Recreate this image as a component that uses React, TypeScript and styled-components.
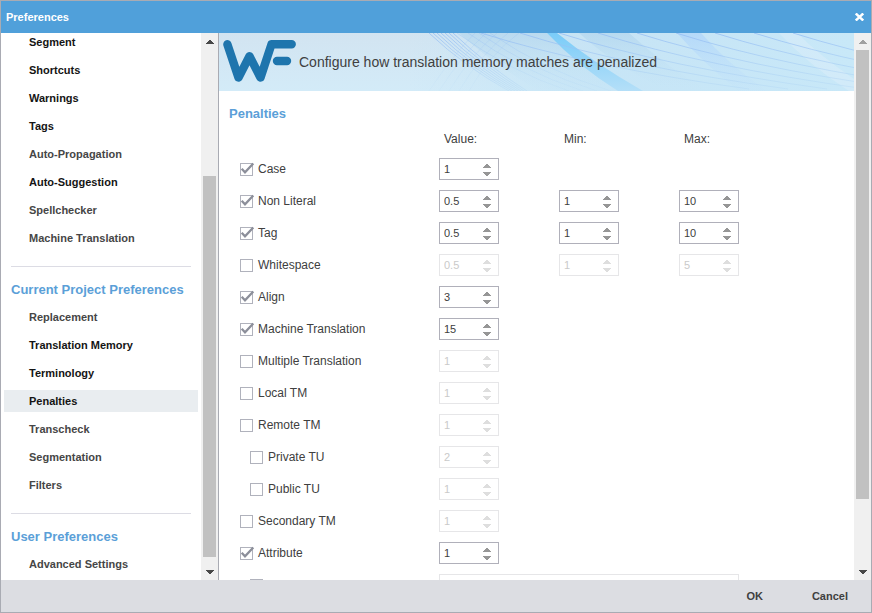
import React, { useState } from "react";
import styled, { createGlobalStyle } from "styled-components";

const GlobalStyle = createGlobalStyle`
  * { box-sizing: border-box; }
  html, body { margin: 0; height: 100%; }
  body {
    font-family: "Liberation Sans", Arial, sans-serif;
    font-size: 12px;
    line-height: 16px;
    color: #404040;
    background: #fff;
  }
  button, input { font: inherit; color: inherit; }
  button { border: 0; padding: 0; background: none; cursor: pointer; }
`;

const Dialog = styled.div`
  display: flex;
  flex-direction: column;
  height: 100vh;
  border: 1px solid #a9abb3;
  background: #fff;
`;

const TitleBar = styled.header`
  flex: none;
  display: flex;
  align-items: center;
  justify-content: space-between;
  height: 32px;
  padding: 0 7px 0 5px;
  background: #50a0da;
  color: #fff;
`;

const Title = styled.h1`
  margin: 0;
  font-size: 11px;
  font-weight: bold;
`;

const CloseButton = styled.button`
  display: flex;
  color: #fff;
`;

const Body = styled.div`
  flex: 1;
  display: flex;
  min-height: 0;
`;

const Sidebar = styled.aside`
  flex: none;
  display: flex;
  width: 218px;
  border-right: 1px solid #a9abb3;
`;

const Nav = styled.nav`
  flex: 1;
  display: flex;
  flex-direction: column;
  justify-content: flex-end;
  overflow: hidden;
  padding: 0 3px 5px;
`;

const NavGroup = styled.section`
  & + & {
    margin-top: 17px;
  }
`;

const GroupTitle = styled.h2`
  margin: 0 7px;
  padding: 15px 0 8px;
  border-top: 1px solid #dcdce4;
  font-size: 13px;
  line-height: 16px;
  font-weight: bold;
  color: #5b9fd8;
`;

const NavList = styled.ul`
  display: flex;
  flex-direction: column;
  gap: 6px;
  margin: 0;
  padding: 0;
  list-style: none;
`;

const NavLink = styled.a<{ $strong?: boolean; $current?: boolean }>`
  display: block;
  padding: 0 25px;
  font-size: 11px;
  line-height: 22px;
  font-weight: bold;
  text-decoration: none;
  color: ${(p) => (p.$strong ? "#141414" : "#464646")};
  background: ${(p) => (p.$current ? "#e9edf0" : "transparent")};
`;

const ScrollTrack = styled.div`
  flex: none;
  display: flex;
  flex-direction: column;
  align-items: center;
  width: 17px;
  background: #f0f0f0;
`;

const ScrollArrow = styled.button<{ $dim?: boolean }>`
  flex: none;
  display: flex;
  align-items: center;
  justify-content: center;
  width: 17px;
  height: 17px;
  color: ${(p) => (p.$dim ? "#a0a0a0" : "#484848")};
`;

const ScrollSpace = styled.div<{ $grow: number }>`
  flex: ${(p) => p.$grow} 1 0;
`;

const ScrollThumb = styled.div<{ $grow: number }>`
  flex: ${(p) => p.$grow} 1 0;
  width: 13px;
  background: #c1c1c1;
`;

const Main = styled.main`
  flex: 1;
  display: flex;
  min-width: 0;
`;

const Page = styled.div`
  flex: 1;
  min-width: 0;
  overflow: hidden;
`;

const Banner = styled.div`
  position: relative;
  display: flex;
  align-items: center;
  height: 58px;
  padding-left: 4px;
  gap: 3px;
  background: linear-gradient(#d2e4f1, #d3ebf8);
`;

const BannerArt = styled.svg`
  position: absolute;
  inset: 0;
  width: 100%;
  height: 100%;
`;

const Logo = styled.svg`
  position: relative;
  flex: none;
`;

const BannerText = styled.p`
  position: relative;
  margin: 0;
  font-size: 14px;
`;

const Section = styled.section`
  padding: 15px 10px;
`;

const SectionTitle = styled.h2`
  margin: 0 0 9px;
  font-size: 13px;
  line-height: 16px;
  font-weight: bold;
  color: #5b9fd8;
`;

const Rows = styled.div`
  display: flex;
  flex-direction: column;
  gap: 10px;
  padding-left: 11px;
`;

const Row = styled.div`
  display: grid;
  grid-template-columns: 199px 120px 120px 60px;
  align-items: center;
`;

const HeaderRow = styled(Row)`
  padding-bottom: 1px;
`;

const ColumnLabel = styled.span`
  padding-left: 5px;
`;

const CheckLabel = styled.label<{ $nested?: boolean }>`
  display: flex;
  align-items: center;
  gap: 5px;
  height: 22px;
  padding-left: ${(p) => (p.$nested ? "10px" : "0")};
`;

const CheckFrame = styled.span`
  display: grid;
  padding-top: 1px;

  & > * {
    grid-area: 1 / 1;
  }
`;

const Checkbox = styled.input`
  appearance: none;
  width: 13px;
  height: 13px;
  margin: 0;
  border: 1px solid #b0b2bc;
  background: #fff;
`;

const CheckMark = styled.svg`
  overflow: visible;
  pointer-events: none;
`;

const SpinBox = styled.span<{ $wide?: boolean }>`
  display: flex;
  align-items: center;
  width: ${(p) => (p.$wide ? "300px" : "60px")};
  height: 22px;
  padding-right: 7px;
  border: 1px solid #b0b0ba;

  &:has(input:disabled) {
    border-color: #e6e6e8;
    color: #cacaca;
  }
`;

const SpinInput = styled.input`
  flex: 1;
  min-width: 0;
  height: 20px;
  padding: 0 0 0 4px;
  border: 0;
  outline: 0;
  background: none;
  font-size: 11px;
  appearance: textfield;

  &::-webkit-inner-spin-button {
    appearance: none;
    margin: 0;
  }
`;

const SpinButtons = styled.span`
  display: flex;
  flex-direction: column;
  gap: 4px;
  padding-top: 2px;
`;

const SpinButton = styled.button`
  display: flex;
  color: #969696;

  &:disabled {
    color: #dedede;
  }
`;

const Footer = styled.footer`
  flex: none;
  display: flex;
  align-items: center;
  justify-content: flex-end;
  gap: 49px;
  height: 32px;
  padding-right: 23px;
  background: #dcdde2;
`;

const FooterButton = styled.button`
  font-size: 11px;
  font-weight: bold;
`;

type NavEntry = { label: string; strong?: boolean; current?: boolean };

const navGroups: { title?: string; items: NavEntry[] }[] = [
  {
    items: [
      { label: "Segment", strong: true },
      { label: "Shortcuts", strong: true },
      { label: "Warnings", strong: true },
      { label: "Tags", strong: true },
      { label: "Auto-Propagation" },
      { label: "Auto-Suggestion", strong: true },
      { label: "Spellchecker" },
      { label: "Machine Translation" },
    ],
  },
  {
    title: "Current Project Preferences",
    items: [
      { label: "Replacement" },
      { label: "Translation Memory", strong: true },
      { label: "Terminology", strong: true },
      { label: "Penalties", strong: true, current: true },
      { label: "Transcheck" },
      { label: "Segmentation" },
      { label: "Filters" },
    ],
  },
  { title: "User Preferences", items: [{ label: "Advanced Settings" }] },
];

type Penalty = {
  label: string;
  on?: boolean;
  nested?: boolean;
  value: number;
  min?: number;
  max?: number;
};

const penalties: Penalty[] = [
  { label: "Case", on: true, value: 1 },
  { label: "Non Literal", on: true, value: 0.5, min: 1, max: 10 },
  { label: "Tag", on: true, value: 0.5, min: 1, max: 10 },
  { label: "Whitespace", value: 0.5, min: 1, max: 5 },
  { label: "Align", on: true, value: 3 },
  { label: "Machine Translation", on: true, value: 15 },
  { label: "Multiple Translation", value: 1 },
  { label: "Local TM", value: 1 },
  { label: "Remote TM", value: 1 },
  { label: "Private TU", nested: true, value: 2 },
  { label: "Public TU", nested: true, value: 1 },
  { label: "Secondary TM", value: 1 },
  { label: "Attribute", on: true, value: 1 },
];

function Arrow({ down }: { down?: boolean }) {
  return (
    <svg width="8" height="4" viewBox="0 0 8 4" fill="currentColor" shapeRendering="crispEdges" aria-hidden="true">
      <path d={down ? "M0 0h8v1H7v1H6v1H5v1H3V3H2V2H1V1H0z" : "M0 4h8V3H7V2H6V1H5V0H3v1H2v1H1v1H0z"} />
    </svg>
  );
}

function Scrollbar({ before, thumb, after, dimUp }: { before: number; thumb: number; after: number; dimUp?: boolean }) {
  return (
    <ScrollTrack>
      <ScrollArrow type="button" aria-label="Scroll up" $dim={dimUp}>
        <Arrow />
      </ScrollArrow>
      <ScrollSpace $grow={before} />
      <ScrollThumb $grow={thumb} />
      <ScrollSpace $grow={after} />
      <ScrollArrow type="button" aria-label="Scroll down">
        <Arrow down />
      </ScrollArrow>
    </ScrollTrack>
  );
}

function Check({ name, checked, onChange }: { name?: string; checked: boolean; onChange: (on: boolean) => void }) {
  return (
    <CheckFrame>
      <Checkbox type="checkbox" aria-label={name} checked={checked} onChange={(e) => onChange(e.target.checked)} />
      {checked && (
        <CheckMark width="13" height="13" viewBox="0 0 13 13" fill="none" stroke="#8c8f9a" strokeWidth="2.3" aria-hidden="true">
          <path d="M1.700 5.800 5 9.300 13.300 0.500" />
        </CheckMark>
      )}
    </CheckFrame>
  );
}

function Spinner({ label, initial, disabled }: { label: string; initial: number; disabled: boolean }) {
  const [value, setValue] = useState(String(initial));
  const step = (by: number) => setValue(String(Number(value) + by));
  return (
    <SpinBox>
      <SpinInput
        type="number"
        step="any"
        aria-label={label}
        value={value}
        disabled={disabled}
        onChange={(e) => setValue(e.target.value)}
      />
      <SpinButtons>
        <SpinButton type="button" aria-label={`Increase ${label}`} disabled={disabled} onClick={() => step(1)}>
          <Arrow />
        </SpinButton>
        <SpinButton type="button" aria-label={`Decrease ${label}`} disabled={disabled} onClick={() => step(-1)}>
          <Arrow down />
        </SpinButton>
      </SpinButtons>
    </SpinBox>
  );
}

function PenaltyRow({ penalty }: { penalty: Penalty }) {
  const [on, setOn] = useState(Boolean(penalty.on));
  const { label, nested, value, min, max } = penalty;
  return (
    <Row>
      <CheckLabel $nested={nested}>
        <Check checked={on} onChange={setOn} />
        {label}
      </CheckLabel>
      <Spinner label={`${label} value`} initial={value} disabled={!on} />
      {min !== undefined && <Spinner label={`${label} minimum`} initial={min} disabled={!on} />}
      {max !== undefined && <Spinner label={`${label} maximum`} initial={max} disabled={!on} />}
    </Row>
  );
}

function AttributeNameRow() {
  const [on, setOn] = useState(false);
  return (
    <Row>
      <CheckLabel $nested>
        <Check name="Use attribute name" checked={on} onChange={setOn} />
      </CheckLabel>
      <SpinBox $wide>
        <SpinInput type="text" aria-label="Attribute name" disabled={!on} />
      </SpinBox>
    </Row>
  );
}

const strands = Array.from({ length: 9 }, (_, i) => i);

function BannerDrawing() {
  return (
    <BannerArt viewBox="0 0 635 58" preserveAspectRatio="xMaxYMin slice" fill="none" aria-hidden="true">
      <defs>
        <linearGradient id="sky" x1="0" y1="0" x2="1" y2="0">
          <stop offset="0.3" stopColor="#c4e4f6" stopOpacity="0" />
          <stop offset="0.6" stopColor="#c4e4f6" stopOpacity="0.8" />
          <stop offset="1" stopColor="#c8e8f8" />
        </linearGradient>
        <linearGradient id="beam" x1="0" y1="0" x2="0" y2="1">
          <stop offset="0" stopColor="#7accf8" />
          <stop offset="1" stopColor="#b4dff8" />
        </linearGradient>
        <linearGradient id="shade" x1="0" y1="0" x2="0" y2="1">
          <stop offset="0" stopColor="#b2d6ee" stopOpacity="0.7" />
          <stop offset="1" stopColor="#c8e6f6" stopOpacity="0.1" />
        </linearGradient>
        <linearGradient id="violet" x1="0" y1="0" x2="0" y2="1">
          <stop offset="0" stopColor="#b0d6fa" stopOpacity="0.8" />
          <stop offset="1" stopColor="#c0e0fa" stopOpacity="0.1" />
        </linearGradient>
        <linearGradient id="strand" x1="0" y1="0" x2="0" y2="58" gradientUnits="userSpaceOnUse">
          <stop offset="0" stopColor="#92bbf4" stopOpacity="0.75" />
          <stop offset="1" stopColor="#a8d0f2" stopOpacity="0.25" />
        </linearGradient>
      </defs>
      <path d="M0 0H635V58H0Z" fill="url(#sky)" />
      <path d="M240 0H328Q365 36 396 58H320Q278 34 240 0Z" fill="url(#shade)" />
      <path d="M360 0H410Q450 36 490 58H450Q400 36 360 0Z" fill="url(#shade)" />
      <path d="M458 0H482Q510 32 548 58H520Q486 32 458 0Z" fill="url(#violet)" />
      <path d="M560 0H578Q600 22 635 46V58H630Q590 32 560 0Z" fill="#e0f1fa" opacity="0.4" />
      <path d="M328 0H338Q375 30 424 58H399Q360 34 328 0Z" fill="url(#beam)" />
      <g stroke="url(#strand)">
        {strands.slice(0, 7).map((i) => (
          <path key={`steep${i}`} d={`M${210 + i * 4} 0Q${246 + i * 4} 34 ${290 + i * 3} 58`} />
        ))}
        {strands.slice(0, 5).map((i) => (
          <path key={`cross${i}`} d={`M${300 - i * 11} 0Q${270 - i * 9} 22 ${250 - i * 10} 58`} strokeOpacity="0.35" />
        ))}
        {strands.slice(0, 4).map((i) => (
          <path key={`wide${i}`} d={`M${238 + i * 11} 0Q${290 + i * 12} 38 ${350 + i * 14} 58`} strokeOpacity="0.5" />
        ))}
        {strands.map((i) => (
          <path key={`flat${i}`} d={`M${262 + i * 39} 0Q${370 + i * 39} 34 ${530 + i * 39} 56`} />
        ))}
      </g>
    </BannerArt>
  );
}

export default function App() {
  return (
    <>
      <GlobalStyle />
      <Dialog role="dialog" aria-label="Preferences">
        <TitleBar>
          <Title>Preferences</Title>
          <CloseButton type="button" aria-label="Close">
            <svg width="9" height="8" viewBox="0 0 9 8" stroke="currentColor" strokeWidth="2.4" aria-hidden="true">
              <path d="M0.800 0.500 8.200 7.500M8.200 0.500 0.800 7.500" />
            </svg>
          </CloseButton>
        </TitleBar>
        <Body>
          <Sidebar>
            <Nav aria-label="Preference pages">
              {navGroups.map((group, g) => (
                <NavGroup key={g}>
                  {group.title && <GroupTitle>{group.title}</GroupTitle>}
                  <NavList>
                    {group.items.map((item) => (
                      <li key={item.label}>
                        <NavLink
                          href="#"
                          $strong={item.strong}
                          $current={item.current}
                          aria-current={item.current ? "page" : undefined}
                        >
                          {item.label}
                        </NavLink>
                      </li>
                    ))}
                  </NavList>
                </NavGroup>
              ))}
            </Nav>
            <Scrollbar before={126} thumb={381} after={6} />
          </Sidebar>
          <Main>
            <Page>
              <Banner>
                <BannerDrawing />
                <Logo
                  width="73"
                  height="44"
                  viewBox="0 0 73 44"
                  fill="none"
                  stroke="#1e75ad"
                  strokeWidth="8.4"
                  strokeLinecap="round"
                  strokeLinejoin="round"
                  role="img"
                  aria-label="WF"
                >
                  <path d="M4.400 4.300 15.500 37.600 26.500 16.200 37.500 37.600 48.500 4.300H68.700M54 21H64" />
                </Logo>
                <BannerText>Configure how translation memory matches are penalized</BannerText>
              </Banner>
              <Section>
                <SectionTitle>Penalties</SectionTitle>
                <Rows>
                  <HeaderRow>
                    <span />
                    <ColumnLabel>Value:</ColumnLabel>
                    <ColumnLabel>Min:</ColumnLabel>
                    <ColumnLabel>Max:</ColumnLabel>
                  </HeaderRow>
                  {penalties.map((p) => (
                    <PenaltyRow key={p.label} penalty={p} />
                  ))}
                  <AttributeNameRow />
                </Rows>
              </Section>
            </Page>
            <Scrollbar before={0} thumb={449} after={64} dimUp />
          </Main>
        </Body>
        <Footer>
          <FooterButton type="button">OK</FooterButton>
          <FooterButton type="button">Cancel</FooterButton>
        </Footer>
      </Dialog>
    </>
  );
}
